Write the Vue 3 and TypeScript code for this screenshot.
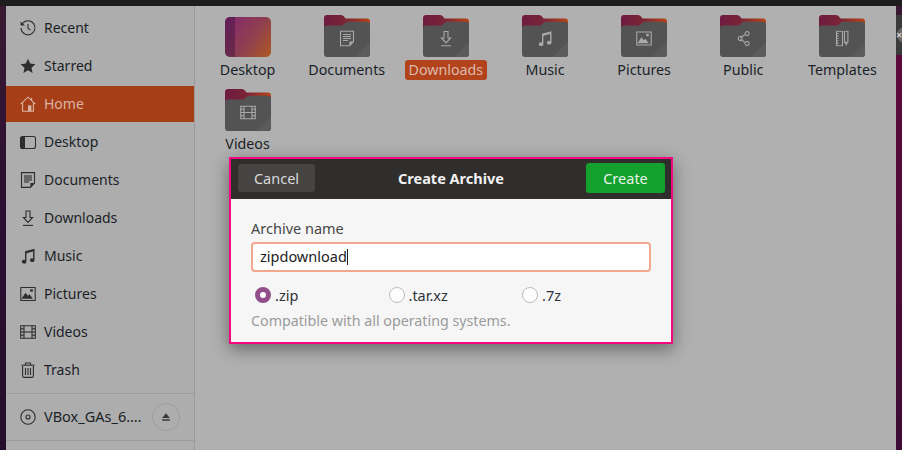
<script setup lang="ts">
interface Glyph { f?: string[]; s?: string[] }

const glyphs: Record<string, Glyph> = {
  recent: { s: ['M2.4 3.6A7 7 0 1 1 1 8', 'M8 4v4.2l2.4 2'], f: ['M.6 1.4 5 5.6H.6z'] },
  star: { f: ['M8 .8l2.2 4.8 5.2.6-3.9 3.5 1.1 5.2L8 12.3l-4.6 2.6 1.1-5.2L.6 6.2l5.2-.6z'] },
  home: { s: ['M.6 8.2 8 1.2l7.4 7', 'M2.6 6.6v8.6h10.8V6.6', 'M11.6 1.8v3'], f: ['M8 9.4h3.4v5.8H8z'] },
  desktop: { s: ['M2.5 2.5h11a2 2 0 0 1 2 2v8a2 2 0 0 1-2 2h-11a2 2 0 0 1-2-2v-8a2 2 0 0 1 2-2z'], f: ['M2.5 2.5H5v12H2.5a2 2 0 0 1-2-2v-8a2 2 0 0 1 2-2z'] },
  documents: { s: ['M1.5.6h13V11l-4 4.4h-9z', 'M4 4h8', 'M4 6h8', 'M4 8h8', 'M4 10h5'], f: ['M10.4 11h4.1l-4.1 4.4z'] },
  downloads: { s: ['M6 1h4v6.5h2.6L8 12.4 3.4 7.5H6z', 'M3 15.4h10'] },
  music: { f: ['M5 3.2 14.5.8v11.4a2.3 1.9 0 1 1-1.4-1.8V3.5L6.4 5.2v8.7A2.3 1.9 0 1 1 5 12z'] },
  pictures: { s: ['M.8 1.5h14.4v13H.8z'], f: ['M1.5 12.8 5.5 6.8l2.4 3 1.6-1.6 3.4 4.6z', 'M10.2 3.2h2.6v2.6h-2.6z'] },
  videos: { s: ['M.7 1.7h14.6v12.6H.7z', 'M4 1.7v12.6', 'M12 1.7v12.6', 'M4 8h8', 'M.7 4.8H4', 'M.7 8H4', 'M.7 11.2H4', 'M12 4.8h3.3', 'M12 8h3.3', 'M12 11.2h3.3'] },
  trash: { s: ['M2.6 4v10a1.4 1.4 0 0 0 1.4 1.4h8a1.4 1.4 0 0 0 1.4-1.4V4', 'M1.5 3.2h13', 'M5.5 3V1h5v2', 'M5.5 6v7', 'M8 6v7', 'M10.5 6v7'] },
  disk: { s: ['M8 .8a7.2 7.2 0 1 1 0 14.4A7.2 7.2 0 0 1 8 .8z', 'M8 6a2 2 0 1 1 0 4 2 2 0 0 1 0-4z'] },
  eject: { f: ['M8 3l5.2 6.4H2.8z', 'M2.8 11h10.4v2H2.8z'] },
  share: { s: ['M4 6.4a2 2 0 1 1 0 3.2 2 2 0 0 1 0-3.2z', 'M11.2 1.2a2 2 0 1 1 0 3.6 2 2 0 0 1 0-3.6z', 'M11.2 11.2a2 2 0 1 1 0 3.6 2 2 0 0 1 0-3.6z', 'M5.5 7 10 4.2', 'M5.5 9 10 11.8'] },
  templates: { s: ['M2.5.8h6v14.4h-6z', 'M2.5 3h2', 'M2.5 5.4h2', 'M2.5 7.8h2', 'M2.5 10.2h2', 'M2.5 12.6h2', 'M10.5.8h3.4v11h-3.4z'], f: ['M10.5 11.8h3.4L12.2 15.4z'] },
}

const places = [
  { name: 'Recent', icon: 'recent' },
  { name: 'Starred', icon: 'star' },
  { name: 'Home', icon: 'home', active: true },
  { name: 'Desktop', icon: 'desktop' },
  { name: 'Documents', icon: 'documents' },
  { name: 'Downloads', icon: 'downloads' },
  { name: 'Music', icon: 'music' },
  { name: 'Pictures', icon: 'pictures' },
  { name: 'Videos', icon: 'videos' },
  { name: 'Trash', icon: 'trash' },
]

const folders = [
  { name: 'Desktop', icon: '' },
  { name: 'Documents', icon: 'documents' },
  { name: 'Downloads', icon: 'downloads', selected: true },
  { name: 'Music', icon: 'music' },
  { name: 'Pictures', icon: 'pictures' },
  { name: 'Public', icon: 'share' },
  { name: 'Templates', icon: 'templates' },
  { name: 'Videos', icon: 'videos' },
]

const formats = [
  { label: '.zip', checked: true },
  { label: '.tar.xz', checked: false },
  { label: '.7z', checked: false },
]
</script>

<template>
  <div class="desktop">
    <div class="edge-panel"><span class="edge-close">×</span></div>
    <div class="window">
      <aside class="sidebar">
        <div v-for="p in places" :key="p.name" class="place" :class="{ active: p.active }">
          <svg class="sym" viewBox="0 0 16 16">
            <path v-for="d in glyphs[p.icon].s" :key="d" :d="d" class="st" />
            <path v-for="d in glyphs[p.icon].f" :key="d" :d="d" class="fl" />
          </svg>
          <span class="place-name">{{ p.name }}</span>
        </div>
        <div class="volume">
          <svg class="sym" viewBox="0 0 16 16">
            <path v-for="d in glyphs.disk.s" :key="d" :d="d" class="st" />
          </svg>
          <span class="volume-name">VBox_GAs_6.…</span>
          <span class="eject">
            <svg viewBox="0 0 16 16" class="eject-sym"><path v-for="d in glyphs.eject.f" :key="d" :d="d" class="fl" /></svg>
          </span>
        </div>
      </aside>

      <main class="files">
        <div v-for="f in folders" :key="f.name" class="file">
          <div class="thumb">
            <div v-if="!f.icon" class="tile"><span class="tile-band"></span></div>
            <svg v-else class="folder" viewBox="0 0 46 42">
              <defs>
                <linearGradient :id="'back-' + f.name" x1="0" y1="0" x2="1" y2="0.15">
                  <stop offset="0" stop-color="#6d1b42" />
                  <stop offset="0.5" stop-color="#7a2436" />
                  <stop offset="1" stop-color="#b4421a" />
                </linearGradient>
              </defs>
              <path d="M0 16V3Q0 0 3 0H17Q19 0 20 1.5L21.5 3.4H43Q46 3.4 46 6.4V16Z" :fill="'url(#back-' + f.name + ')'" />
              <path d="M0 13.5Q0 10.6 3 10.6H17Q19 10.6 20.5 9L22 7.6Q23 6.8 25 6.8H43Q46 6.8 46 9.8V39Q46 42 43 42H3Q0 42 0 39Z" fill="#545353" />
              <path d="M46 27V39Q46 42 43 42H31Z" fill="#5c5b5b" />
              <svg x="15" y="15.5" width="16" height="16" viewBox="0 0 16 16">
                <path v-for="d in glyphs[f.icon].s" :key="d" :d="d" class="gst" />
                <path v-for="d in glyphs[f.icon].f" :key="d" :d="d" class="gfl" />
              </svg>
            </svg>
          </div>
          <span class="file-name" :class="{ selected: f.selected }">{{ f.name }}</span>
        </div>
      </main>

      <section class="dialog">
        <header class="dialog-head">
          <button class="btn cancel">Cancel</button>
          <h1 class="dialog-title">Create Archive</h1>
          <button class="btn create">Create</button>
        </header>
        <div class="dialog-body">
          <label class="field-label">Archive name</label>
          <div class="entry">zipdownload<span class="caret"></span></div>
          <div class="formats">
            <div v-for="o in formats" :key="o.label" class="format">
              <span class="radio" :class="{ on: o.checked }"></span>
              <span>{{ o.label }}</span>
            </div>
          </div>
          <p class="hint">Compatible with all operating systems.</p>
        </div>
      </section>
    </div>
  </div>
</template>

<style>
html, body { margin: 0; padding: 0; }
</style>

<style scoped>
.desktop {
  position: relative;
  width: 902px;
  height: 450px;
  overflow: hidden;
  box-sizing: border-box;
  padding: 6px 6px 0;
  background: linear-gradient(180deg, #1f1c1e 0, #1f1c1e 6px, #3a1a33 6px, #2b1031 200px, #250e2c 450px);
  font-family: "Noto Sans", "Open Sans", sans-serif;
  font-size: 14px;
  color: #1b1f27;
}
.edge-panel {
  position: absolute;
  right: 0;
  top: 15px;
  width: 6px;
  height: 40px;
  background: #3b3a3a;
  overflow: hidden;
}
.desktop::after {
  content: "";
  position: absolute;
  right: 0;
  top: 55px;
  bottom: 0;
  width: 6px;
  background: linear-gradient(180deg, #5d0a3c, #3d0c34);
}
.edge-close {
  position: absolute;
  left: 1px;
  top: 12px;
  width: 16px;
  height: 16px;
  border-radius: 50%;
  background: #6a6a6a;
  color: #e8e8e8;
  font-size: 11px;
  line-height: 16px;
  text-indent: -1px;
}
.window {
  position: relative;
  display: flex;
  width: 890px;
  height: 444px;
  background: #b0b0b0;
}
.sidebar {
  width: 188px;
  flex: none;
  border-right: 1px solid #9a9a9a;
  background: #adadad;
  padding-top: 3px;
}
.place {
  display: flex;
  align-items: center;
  height: 38px;
  box-sizing: border-box;
  padding-left: 14px;
  gap: 8px;
}
.place-name { margin-top: -2px; }
.place.active {
  background: #a63e17;
  color: #dbb4a4;
  height: 36px;
  margin: 1px 0;
}
.sym { width: 16px; height: 16px; flex: none; color: #2e2e2e; overflow: visible; }
.active .sym { color: #dbb4a4; }
.st { fill: none; stroke: currentColor; stroke-width: 1.1; }
.fl { fill: currentColor; }
.volume {
  display: flex;
  align-items: center;
  height: 48px;
  box-sizing: border-box;
  margin-top: 4px;
  border-top: 1px solid #9c9c9c;
  border-bottom: 1px solid #9c9c9c;
  padding-left: 14px;
  gap: 8px;
}
.volume-name { flex: none; width: 100px; white-space: nowrap; font-size: 14.5px; margin-top: -2px; }
.eject {
  display: flex;
  align-items: center;
  justify-content: center;
  width: 28px;
  height: 28px;
  box-sizing: border-box;
  border: 1px solid #9d9d9d;
  border-radius: 50%;
  color: #3a3a3a;
}
.eject-sym { width: 12px; height: 12px; }
.files {
  flex: 1;
  display: grid;
  grid-template-columns: repeat(7, 99.15px);
  grid-auto-rows: 74px;
  align-content: start;
  padding: 9px 0 0 3px;
}
.file {
  display: flex;
  flex-direction: column;
  align-items: center;
}
.thumb {
  width: 46px;
  height: 42px;
  display: flex;
  align-items: flex-end;
}
.folder { width: 46px; height: 42px; display: block; }
.gst { fill: none; stroke: #a9a9a9; stroke-width: 1.1; }
.gfl { fill: #a9a9a9; }
.tile {
  position: relative;
  width: 46px;
  height: 40px;
  border-radius: 5px;
  overflow: hidden;
  background: linear-gradient(125deg, #84296d 5%, #8e3f50 55%, #ae5821 100%);
}
.tile-band {
  position: absolute;
  left: 0;
  top: 0;
  bottom: 0;
  width: 10px;
  background: rgba(40, 10, 50, 0.35);
}
.file-name {
  margin-top: 3px;
  padding: 0 4px;
  line-height: 20px;
  font-size: 14.25px;
  border-radius: 3px;
  white-space: nowrap;
}
.file-name.selected {
  background: #b3431b;
  color: #dcb9ab;
}
.dialog {
  position: absolute;
  left: 223px;
  top: 151px;
  width: 440px;
  height: 183px;
  border: 2px solid #f5087f;
  background: #f6f6f6;
  box-shadow: 0 5px 16px rgba(0, 0, 0, 0.42);
  display: flex;
  flex-direction: column;
  font-size: 14.5px;
}
.dialog-head {
  height: 40px;
  box-sizing: border-box;
  flex: none;
  display: flex;
  align-items: center;
  justify-content: space-between;
  padding: 0 6px 2px 7px;
  background: #302d2d;
  position: relative;
}
.btn {
  font: inherit;
  border: none;
  border-radius: 3px;
  padding: 0;
  text-align: center;
}
.cancel {
  width: 77px;
  height: 28px;
  background: #454442;
  color: #dadada;
}
.create {
  width: 79px;
  height: 30px;
  background: #13a02c;
  color: #e8f4ea;
}
.dialog-title {
  position: absolute;
  left: 0;
  right: 0;
  margin: 0;
  text-align: center;
  font-size: 14.5px;
  font-weight: 700;
  color: #f2f2f2;
  pointer-events: none;
}
.dialog-body {
  flex: 1;
  padding: 19px 20px 0;
  background: #f6f6f6;
}
.field-label {
  display: block;
  line-height: 20px;
  color: #474747;
}
.entry {
  box-sizing: border-box;
  height: 30px;
  margin-top: 4px;
  width: 400px;
  border: 2px solid #f2a78f;
  border-radius: 4px;
  background: #fff;
  padding-left: 7px;
  line-height: 24px;
  color: #1d1d1d;
}
.caret {
  display: inline-block;
  width: 1px;
  height: 16px;
  background: #222;
  vertical-align: -3px;
}
.formats {
  display: flex;
  margin-top: 13px;
  padding-left: 4px;
  color: #2f3338;
}
.format {
  display: flex;
  flex: none;
  align-items: center;
  width: 133.5px;
  height: 20px;
  gap: 4px;
}
.radio {
  width: 16px;
  height: 16px;
  box-sizing: border-box;
  border-radius: 50%;
  border: 1px solid #bdbdbd;
  background: #fdfdfd;
}
.radio.on {
  border: 5px solid #924d8b;
  background: #fff;
}
.hint {
  margin: 6px 0 0;
  line-height: 20px;
  font-size: 14.25px;
  color: #9b9b9b;
}
</style>
